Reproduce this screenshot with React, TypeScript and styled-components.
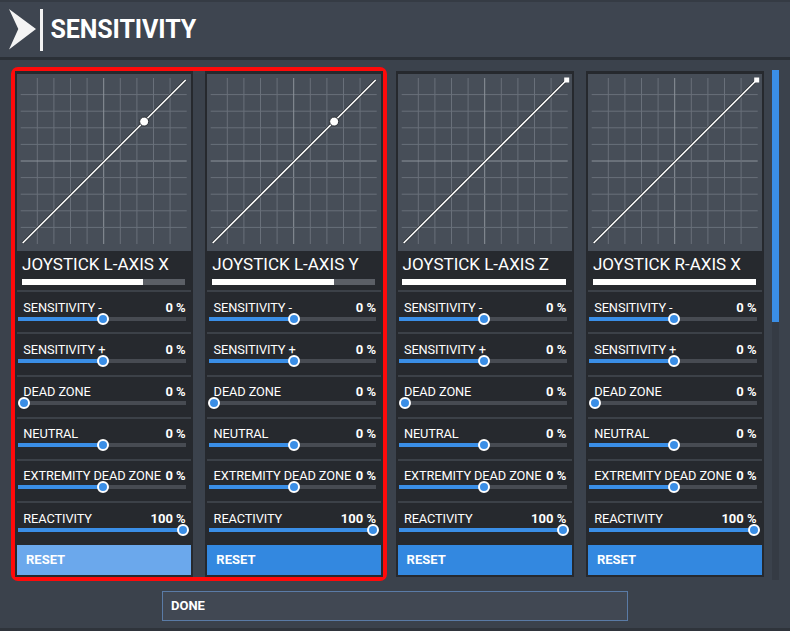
import styled, { createGlobalStyle } from 'styled-components';

const GlobalStyle = createGlobalStyle`
  html, body {
    margin: 0;
    padding: 0;
    background: #3b424c;
  }
  body {
    font-family: Roboto, "Liberation Sans", sans-serif;
    overflow: hidden;
  }
`;

type Axis = { name: string; fill: number; dot: boolean; focused?: boolean };
type Setting = { label: string; value: string; pos: number };

const axes: Axis[] = [
  { name: 'JOYSTICK L-AXIS X', fill: 0.745, dot: true, focused: true },
  { name: 'JOYSTICK L-AXIS Y', fill: 0.745, dot: true },
  { name: 'JOYSTICK L-AXIS Z', fill: 1, dot: false },
  { name: 'JOYSTICK R-AXIS X', fill: 1, dot: false },
];

const settings: Setting[] = [
  { label: 'SENSITIVITY -', value: '0 %', pos: 0.5 },
  { label: 'SENSITIVITY +', value: '0 %', pos: 0.5 },
  { label: 'DEAD ZONE', value: '0 %', pos: 0 },
  { label: 'NEUTRAL', value: '0 %', pos: 0.5 },
  { label: 'EXTREMITY DEAD ZONE', value: '0 %', pos: 0.5 },
  { label: 'REACTIVITY', value: '100 %', pos: 1 },
];

const Page = styled.div`
  width: 790px;
  height: 631px;
  box-sizing: border-box;
  display: flex;
  flex-direction: column;
  background: #3b424c;
  border-bottom: 3px solid #2f343b;
`;

const Header = styled.header`
  height: 60px;
  box-sizing: border-box;
  display: flex;
  align-items: center;
  padding-left: 9px;
  background: #3e4550;
  border-top: 2px solid #353b44;
  border-bottom: 3px solid #2b3037;
  flex-shrink: 0;
`;

const Divider = styled.div`
  width: 2.5px;
  height: 42px;
  background: #f2f2f2;
  margin-left: 3px;
  margin-right: 8px;
`;

const Title = styled.h1`
  margin: 0;
  font-size: 25px;
  font-weight: 700;
  color: #ffffff;
  letter-spacing: -0.1px;
  line-height: 30px;
`;

const Body = styled.div`
  display: flex;
  align-items: flex-start;
  padding: 11px 0 0 15px;
`;

const Cards = styled.div`
  display: flex;
  gap: 12.3px;
`;

const Focus = styled.div`
  display: flex;
  gap: 12.3px;
  border-radius: 3px;
  box-shadow: 0 0 0 4px #ff0a0a;
`;

const Scrollbar = styled.div`
  width: 7px;
  height: 510px;
  margin-left: 8px;
  margin-top: -1px;
  background: #353b44;
  display: flex;
  flex-direction: column;
`;

const ScrollThumb = styled.div`
  height: 252px;
  background: #3a8ee6;
`;

const Card = styled.div`
  width: 178px;
  height: 506px;
  box-sizing: border-box;
  background: #26292e;
  padding: 3px 2px 2px;
  display: flex;
  flex-direction: column;
`;

const GraphPanel = styled.div`
  height: 177px;
  background: #474e58;
  flex-shrink: 0;
  svg {
    display: block;
  }
`;

const AxisName = styled.div`
  margin-top: 3.2px;
  padding-left: 5px;
  font-size: 17px;
  line-height: 20px;
  color: #ffffff;
  white-space: nowrap;
`;

const Meter = styled.div`
  margin: 4.6px 6px 0 4.7px;
  height: 6.5px;
  background: #5b5f66;
  display: flex;
`;

const MeterFill = styled.div`
  background: #ffffff;
  height: 100%;
`;

const Rows = styled.div`
  margin-top: 5px;
  display: flex;
  flex-direction: column;
`;

const Row = styled.div`
  height: 42.2px;
  box-sizing: border-box;
  border-top: 2px solid #3c4148;
  padding-top: 8.3px;
`;

const RowHead = styled.div`
  display: flex;
  justify-content: space-between;
  align-items: baseline;
  height: 13px;
  line-height: 13px;
  padding: 0 5.3px 0 6.3px;
  color: #ffffff;
`;

const Label = styled.span`
  font-size: 12.8px;
  letter-spacing: -0.1px;
  white-space: nowrap;
`;

const Value = styled.span`
  font-size: 13px;
  font-weight: 700;
  white-space: nowrap;
`;

const SliderBox = styled.div`
  height: 10px;
  display: flex;
  align-items: center;
  padding: 0 5px 0 1.3px;
`;

const Track = styled.div`
  position: relative;
  flex: 1;
  height: 4px;
  background: #474b52;
`;

const TrackFill = styled.div`
  position: absolute;
  left: 0;
  top: 0;
  height: 100%;
  background: #3a8ee6;
`;

const Thumb = styled.div`
  position: absolute;
  top: 50%;
  width: 12px;
  height: 12px;
  box-sizing: border-box;
  border-radius: 50%;
  background: #3a8ee6;
  border: 2px solid #ffffff;
  transform: translate(-50%, -50%);
`;

const ResetButton = styled.button<{ $focused?: boolean }>`
  margin-top: 1.3px;
  height: 30px;
  border: none;
  padding: 0 0 0 9px;
  text-align: left;
  font-family: Roboto, "Liberation Sans", sans-serif;
  font-size: 13px;
  font-weight: 700;
  color: #ffffff;
  background: ${p => (p.$focused ? '#6ba8ec' : '#3388e0')};
`;

const Footer = styled.div`
  padding: 10.5px 0 0 162px;
`;

const DoneButton = styled.button`
  width: 466px;
  height: 30px;
  box-sizing: border-box;
  border: 1px solid #5a7ba6;
  background: #414853;
  padding: 0 0 0 8px;
  text-align: left;
  font-family: Roboto, "Liberation Sans", sans-serif;
  font-size: 13px;
  font-weight: 700;
  color: #ffffff;
`;

const Logo = () => (
  <svg width="28" height="41" viewBox="0 0 28 41">
    <polygon points="0,0 27,20 0,40.5 9.3,20" fill="#f4f4f4" />
  </svg>
);

const Graph = ({ fill, dot }: { fill: number; dot: boolean }) => {
  const x0 = 3.7;
  const y0 = 4;
  const s = 166;
  const step = s / 10;
  const lines = [];
  for (let k = 1; k < 10; k++) {
    const c = k === 5 ? '#8d939b' : '#69707a';
    const p = k * step;
    lines.push(<line key={'v' + k} x1={x0 + p} y1={y0} x2={x0 + p} y2={y0 + s} stroke={c} strokeWidth={1} />);
    lines.push(<line key={'h' + k} x1={x0} y1={y0 + p} x2={x0 + s} y2={y0 + p} stroke={c} strokeWidth={1} />);
  }
  const sx = x0 + 2;
  const sy = y0 + s - 1;
  const ex = x0 + s - 1;
  const ey = y0 + 2;
  const dx = sx + (ex - sx) * fill;
  const dy = sy + (ey - sy) * fill;
  return (
    <svg width="174" height="177" viewBox="0 0 174 177">
      {lines}
      <line x1={sx} y1={sy} x2={ex} y2={ey} stroke="#2a2e33" strokeWidth={3} />
      <line x1={sx} y1={sy} x2={ex} y2={ey} stroke="#ffffff" strokeWidth={1.6} />
      {dot ? (
        <circle cx={dx} cy={dy} r={4.5} fill="#ffffff" stroke="#2a2e33" strokeWidth={1} />
      ) : (
        <rect x={ex - 2.5} y={ey - 2.5} width={5} height={5} fill="#ffffff" />
      )}
    </svg>
  );
};

const Slider = ({ pos }: { pos: number }) => {
  const center = 5.7 + pos * 158.7;
  return (
    <SliderBox>
      <Track>
        <TrackFill style={{ width: pos === 0 ? 0 : center }} />
        <Thumb style={{ left: center }} />
      </Track>
    </SliderBox>
  );
};

const AxisCard = ({ axis }: { axis: Axis }) => (
  <Card>
    <GraphPanel>
      <Graph fill={axis.fill} dot={axis.dot} />
    </GraphPanel>
    <AxisName>{axis.name}</AxisName>
    <Meter>
      <MeterFill style={{ width: `${axis.fill * 100}%` }} />
    </Meter>
    <Rows>
      {settings.map(s => (
        <Row key={s.label}>
          <RowHead>
            <Label>{s.label}</Label>
            <Value>{s.value}</Value>
          </RowHead>
          <Slider pos={s.pos} />
        </Row>
      ))}
    </Rows>
    <ResetButton $focused={axis.focused}>RESET</ResetButton>
  </Card>
);

export default function App() {
  return (
    <Page>
      <GlobalStyle />
      <Header>
        <Logo />
        <Divider />
        <Title>SENSITIVITY</Title>
      </Header>
      <Body>
        <Cards>
          <Focus>
            <AxisCard axis={axes[0]} />
            <AxisCard axis={axes[1]} />
          </Focus>
          <AxisCard axis={axes[2]} />
          <AxisCard axis={axes[3]} />
        </Cards>
        <Scrollbar>
          <ScrollThumb />
        </Scrollbar>
      </Body>
      <Footer>
        <DoneButton>DONE</DoneButton>
      </Footer>
    </Page>
  );
}
